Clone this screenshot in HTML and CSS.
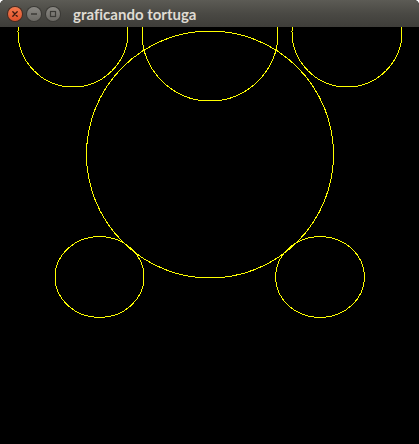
FILE: index.html
```html
<!DOCTYPE html>
<html>
<head>
<meta charset="utf-8">
<link rel="stylesheet" href="styles.css">
</head>
<body>
<div class="window">
  <div class="titlebar">
    <div class="buttons">
      <span class="btn close">
        <svg width="14" height="14" viewBox="0 0 14 14"><path d="M4.8 4.8 L9.2 9.2 M9.2 4.8 L4.8 9.2" stroke="#3a1a10" stroke-width="1.3" stroke-linecap="round"/></svg>
      </span>
      <span class="btn">
        <svg width="14" height="14" viewBox="0 0 14 14"><path d="M4 7 H10" stroke="#3b3a36" stroke-width="1.4"/></svg>
      </span>
      <span class="btn">
        <svg width="14" height="14" viewBox="0 0 14 14"><rect x="4.5" y="4.5" width="5" height="5" fill="none" stroke="#3b3a36" stroke-width="1.2"/></svg>
      </span>
    </div>
    <div class="title">graficando tortuga</div>
  </div>
  <div class="canvas">
    <svg class="drawing" width="419" height="417" viewBox="0 27 419 417" shape-rendering="crispEdges">
      <g fill="none" stroke="#ffff00" stroke-width="1">
        <circle cx="73" cy="32" r="55"/>
        <circle cx="210" cy="33" r="68"/>
        <circle cx="347" cy="32" r="55"/>
        <circle cx="210" cy="154.5" r="123.5"/>
        <ellipse cx="99.5" cy="277" rx="44.5" ry="40.5"/>
        <ellipse cx="320" cy="277" rx="44.5" ry="40.5"/>
      </g>
    </svg>
  </div>
</div>
</body>
</html>
```

FILE: styles.css
```css
html, body {
  margin: 0;
  padding: 0;
  background: #ffffff;
}

.window {
  width: 419px;
  height: 444px;
  overflow: hidden;
  border-radius: 5px 5px 0 0;
  background: #000000;
  display: flex;
  flex-direction: column;
}

.titlebar {
  height: 27px;
  flex: none;
  background: linear-gradient(to bottom, #5c5b55 0%, #4a4944 50%, #3e3d39 100%);
  display: flex;
  align-items: center;
  padding-left: 8px;
  box-sizing: border-box;
}

.buttons {
  display: flex;
  gap: 5px;
  margin-top: 1px;
}

.btn {
  width: 14px;
  height: 14px;
  border-radius: 50%;
  background: linear-gradient(to bottom, #8a8883, #6b6964);
  box-shadow: 0 0 0 1px #3a3935;
  display: flex;
}

.btn.close {
  background: linear-gradient(to bottom, #f47a4e, #e0512a);
  box-shadow: 0 0 0 1px #4a2a1e;
}

.title {
  margin-left: 13px;
  font-family: "Lato", "DejaVu Sans", sans-serif;
  font-weight: bold;
  font-size: 15px;
  font-variant-ligatures: none;
  color: #dfdbd2;
  margin-top: 1px;
}

.canvas {
  flex: 1;
  background: #000000;
}

.drawing {
  display: block;
}
```
